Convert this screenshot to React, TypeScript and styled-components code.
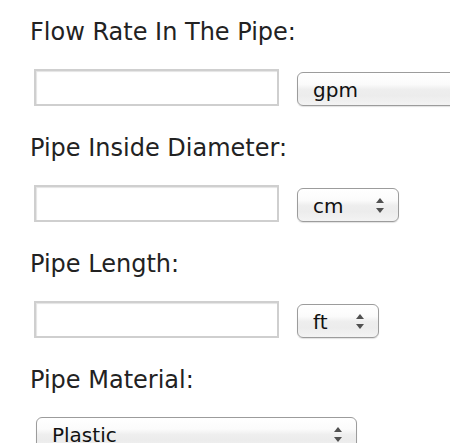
import React from "react";
import styled, { createGlobalStyle } from "styled-components";

const Global = createGlobalStyle`
  html, body { margin: 0; padding: 0; background: #ffffff; overflow: hidden; }
  body { font-family: "DejaVu Sans", "Liberation Sans", sans-serif; }
`;

const Form = styled.form`
  padding: 17px 0 0 30px;
  display: flex;
  flex-direction: column;
  gap: 27px;
  overflow: hidden;
`;

const Field = styled.div`
  display: flex;
  flex-direction: column;
  gap: 22px;
`;

const Label = styled.label`
  display: block;
  font-size: 24px;
  line-height: 30px;
  color: #222222;
  white-space: nowrap;
`;

const Row = styled.div<{ $indent?: number }>`
  display: flex;
  align-items: flex-end;
  gap: 18px;
  margin-left: ${(p) => p.$indent ?? 4}px;
`;

const TextInput = styled.input`
  box-sizing: border-box;
  width: 245px;
  height: 37px;
  margin: 0;
  border: 2px solid #cfcfcf;
  box-shadow: inset 1px 1px 1px #e4e4e4;
  background: #ffffff;
  font-family: inherit;
  font-size: 18px;
  outline: none;
  flex: none;
`;

const SelectWrap = styled.div<{ $w: number }>`
  position: relative;
  width: ${(p) => p.$w}px;
  height: 34px;
  flex: none;
`;

const Select = styled.select`
  appearance: none;
  -webkit-appearance: none;
  box-sizing: border-box;
  width: 100%;
  height: 34px;
  margin: 0;
  padding: 1px 0 0 15px;
  border: 1px solid #9c9c9c;
  border-radius: 6px;
  background: linear-gradient(
    to bottom,
    #ffffff 0%,
    #fbfbfb 35%,
    #eeeeee 52%,
    #ececec 70%,
    #f3f3f3 100%
  );
  box-shadow: 0 1px 1px rgba(0, 0, 0, 0.12);
  font-family: "DejaVu Sans", "Liberation Sans", sans-serif;
  font-size: 20px;
  color: #111111;
  outline: none;
`;

const Arrows = styled.svg`
  position: absolute;
  right: 15px;
  top: 50%;
  width: 8px;
  height: 15px;
  margin-top: -7px;
  pointer-events: none;
`;

function UnitSelect({ width, options }: { width: number; options: string[] }) {
  return (
    <SelectWrap $w={width}>
      <Select defaultValue={options[0]}>
        {options.map((o) => (
          <option key={o}>{o}</option>
        ))}
      </Select>
      <Arrows viewBox="0 0 8 15">
        <polygon points="4,0 8,5 0,5" fill="#505050" />
        <polygon points="0,10 8,10 4,15" fill="#505050" />
      </Arrows>
    </SelectWrap>
  );
}

export default function App() {
  return (
    <>
      <Global />
      <Form>
        <Field>
          <Label>Flow Rate In The Pipe:</Label>
          <Row>
            <TextInput type="text" />
            <UnitSelect width={300} options={["gpm", "lps", "cfs"]} />
          </Row>
        </Field>
        <Field>
          <Label>Pipe Inside Diameter:</Label>
          <Row>
            <TextInput type="text" />
            <UnitSelect width={102} options={["cm", "mm", "in"]} />
          </Row>
        </Field>
        <Field>
          <Label>Pipe Length:</Label>
          <Row>
            <TextInput type="text" />
            <UnitSelect width={82} options={["ft", "m"]} />
          </Row>
        </Field>
        <Field>
          <Label>Pipe Material:</Label>
          <Row $indent={6}>
            <UnitSelect width={321} options={["Plastic", "Steel", "Copper"]} />
          </Row>
        </Field>
      </Form>
    </>
  );
}
